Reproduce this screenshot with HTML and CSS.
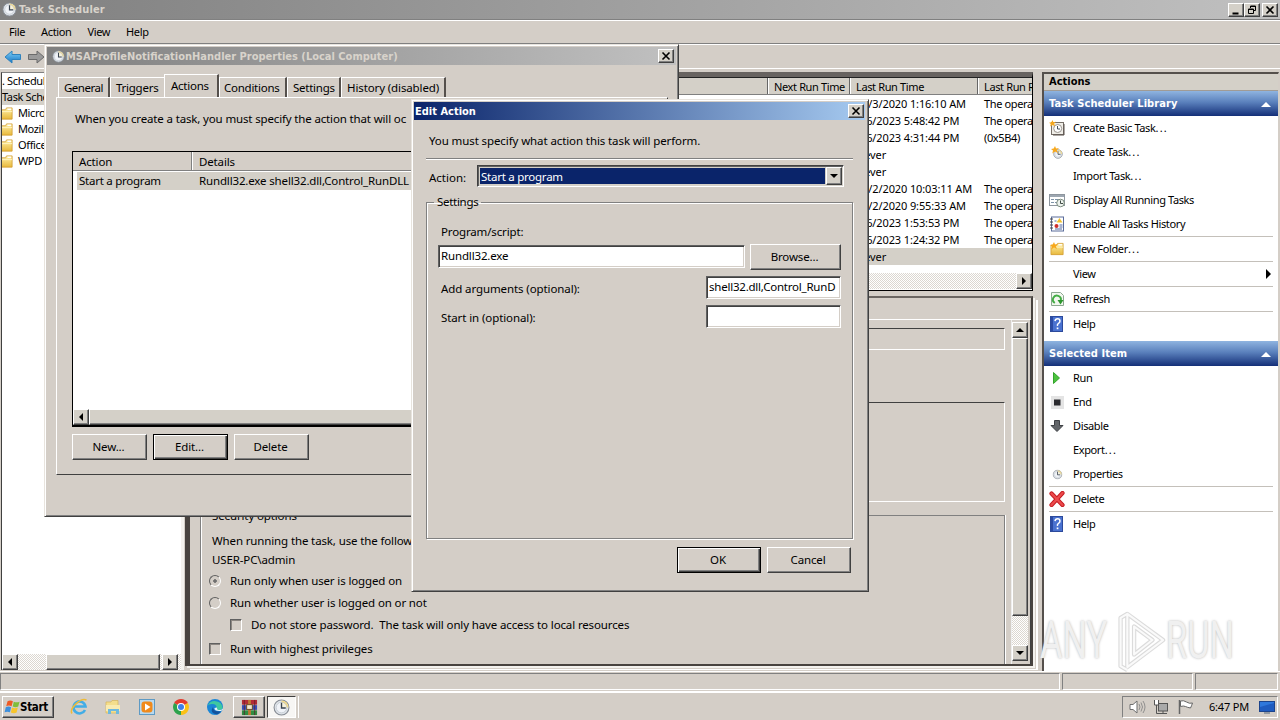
FILE: index.html
```html
<!DOCTYPE html>
<html lang="en">
<head>
  <meta charset="UTF-8">
  <title>Task Scheduler</title>
  <link rel="stylesheet" href="styles.css">
</head>
<body>
  <!-- Shared icons -->
  <svg class="defs" width="0" height="0">
    <defs>
      <linearGradient id="gold" x1="0" y1="0" x2="0" y2="1"><stop offset="0" stop-color="#fff0a8"/><stop offset="1" stop-color="#e8b93c"/></linearGradient>
      <linearGradient id="sky" x1="0" y1="0" x2="0" y2="1"><stop offset="0" stop-color="#7fd0f8"/><stop offset="1" stop-color="#1675c4"/></linearGradient>
      <symbol id="clock" viewBox="0 0 16 16">
        <circle cx="8" cy="8" r="7" fill="#dfe4ea" stroke="#858b93"/>
        <path d="M8 8V1.5A6.5 6.5 0 0 1 14.500 8z" fill="#f6dc86"/>
        <circle cx="8" cy="8" r="5" fill="#f7fafd" fill-opacity=".7" stroke="#b7bec6" stroke-width=".6"/>
        <path d="M8 3.500V8.500H12" fill="none" stroke="#39434f" stroke-width="1.300"/>
      </symbol>
      <symbol id="folder" viewBox="0 0 16 16">
        <path d="M1 14V4h6l1-2h6v12z" fill="url(#gold)" stroke="#d09a2c" stroke-width=".8"/>
        <path d="M9 3.500h4" stroke="#fff" stroke-width="1.500"/>
        <path d="M1.500 6h12.500" stroke="#fff5c4"/>
      </symbol>
      <symbol id="star" viewBox="0 0 8 8">
        <path d="M4 0l1 2.500L8 2 5.800 4.200 7 7 4 5.600 1.300 7.500 2 4.600 0 3l2.700-.5z" fill="#f7a81c"/>
      </symbol>
      <symbol id="help" viewBox="0 0 16 16">
        <rect x="1.500" y=".5" width="12" height="15" fill="#4a72d0" stroke="#2c4a9c"/>
        <rect x="2" y="1" width="2" height="14" fill="#2a4aa4"/>
        <path d="M6 5.200q.3-2.400 2.600-2.400T11 5q0 1.400-1.500 2.300T8.500 10" fill="none" stroke="#fff" stroke-width="1.500"/>
        <rect x="7.700" y="11.500" width="1.700" height="1.700" fill="#fff"/>
      </symbol>
      <symbol id="cross" viewBox="0 0 10 10"><path d="M1.500 1.500l7 7M8.500 1.500l-7 7" stroke="#000" stroke-width="1.600"/></symbol>
    </defs>
  </svg>

  <div class="desktop">
    <div class="titlebar inactive">
      <svg class="ic"><use href="#clock"/></svg>
      <span class="title">Task Scheduler</span>
      <div class="caps">
        <i class="cap"><svg viewBox="0 0 10 10"><path d="M1.500 8.500h6" stroke="#000" stroke-width="2"/></svg></i>
        <i class="cap"><svg viewBox="0 0 10 10"><path d="M3.500 3V1h5v4.500H7M1.500 4h5v4.500h-5zM3.500 1.500h5M1.500 4.500h5" fill="none" stroke="#000"/></svg></i>
        <i class="cap gap"><svg><use href="#cross"/></svg></i>
      </div>
    </div>
    <div class="menubar"><span>File</span><span>Action</span><span>View</span><span>Help</span></div>
    <div class="toolbar">
      <svg viewBox="0 0 18 16"><path d="M1 8l7-6v3.500h8.500v5H8V14z" fill="url(#sky)" stroke="#2f82bd"/></svg>
      <svg viewBox="0 0 18 16"><path d="M17 8l-7-6v3.500H1.500v5H10V14z" fill="#9a9a9a" stroke="#6b6b6b"/></svg>
    </div>

    <div class="workspace">
      <div class="tree">
        <div class="tree-list">
          <div class="node root">. Scheduler</div>
          <div class="node sel">Task Scheduler</div>
          <div class="node"><svg><use href="#folder"/></svg>Microsoft</div>
          <div class="node"><svg><use href="#folder"/></svg>Mozilla</div>
          <div class="node"><svg><use href="#folder"/></svg>Office</div>
          <div class="node"><svg><use href="#folder"/></svg>WPD</div>
        </div>
        <div class="hscroll">
          <i class="sb left"></i><i class="thumb"></i><i class="sb right"></i>
        </div>
      </div>

      <div class="center">
        <div class="tasks">
          <div class="row head"><span></span><span>Next Run Time</span><span>Last Run Time</span><span>Last Run R</span></div>
          <div class="row"><span>12/3/2020 1:16:10 AM</span><span>The opera</span></div>
          <div class="row"><span>6/6/2023 5:48:42 PM</span><span>The opera</span></div>
          <div class="row"><span>6/6/2023 4:31:44 PM</span><span>(0x5B4)</span></div>
          <div class="row"><span>Never</span></div>
          <div class="row"><span>Never</span></div>
          <div class="row"><span>12/2/2020 10:03:11 AM</span><span>The opera</span></div>
          <div class="row"><span>12/2/2020 9:55:33 AM</span><span>The opera</span></div>
          <div class="row"><span>6/6/2023 1:53:53 PM</span><span>The opera</span></div>
          <div class="row"><span>6/6/2023 1:24:32 PM</span><span>The opera</span></div>
          <div class="row sel"><span>Never</span></div>
          <div class="hscroll"><i class="sb right"></i></div>
        </div>
        <div class="details">
          <div class="details-tabs"></div>
          <div class="details-body">
            <div class="details-page">
              <div class="box name"></div>
              <div class="box desc"></div>
              <div class="security">
                <div class="legend">Security options</div>
                <p class="when">When running the task, use the following user account:</p>
                <p class="user">USER-PC\admin</p>
                <div class="opt"><i class="radio on"></i>Run only when user is logged on</div>
                <div class="opt second"><i class="radio"></i>Run whether user is logged on or not</div>
                <div class="opt sub"><i class="check"></i>Do not store password.&nbsp; The task will only have access to local resources</div>
                <div class="opt last"><i class="check"></i>Run with highest privileges</div>
              </div>
            </div>
            <div class="vscroll">
              <i class="sb up"></i><i class="thumb"></i><i class="track"></i><i class="sb down"></i>
            </div>
          </div>
        </div>
      </div>

      <div class="actions">
        <div class="actions-title">Actions</div>
        <div class="section">Task Scheduler Library<i></i></div>
        <div class="item"><svg viewBox="0 0 16 16"><rect x="2.500" y="2.500" width="12" height="12" fill="#f0eee8" stroke="#766f68"/><path d="M15 4v11H4" fill="none" stroke="#58514b"/><circle cx="8.700" cy="8.500" r="4" fill="#fff" stroke="#9a948e"/><path d="M8.500 6v3H11" fill="none" stroke="#44505c"/><use href="#star" x="0" y="0" width="7" height="7"/></svg><span>Create Basic Task<span class="dots">...</span></span></div>
        <div class="item"><svg viewBox="0 0 16 16"><use href="#clock" x="4" y="5" width="10" height="10"/><use href="#star" x="2" y="2" width="8" height="8"/></svg><span>Create Task<span class="dots">...</span></span></div>
        <div class="item"><svg></svg><span>Import Task<span class="dots">...</span></span></div>
        <div class="item"><svg viewBox="0 0 16 16"><rect x=".5" y="2.500" width="15" height="11" fill="#fff" stroke="#8e969e"/><path d="M1 4h14" stroke="#9da7b1" stroke-width="2"/><path d="M2 7.500h3M6 7.500h4M2 10.500h3M6 10.500h2" stroke="#7e93a8"/><circle cx="11.500" cy="11" r="3.800" fill="#eef3ee" stroke="#7b8b7e"/><path d="M11.500 8.500V11.500H14" fill="none" stroke="#3f4b46"/></svg>Display All Running Tasks</div>
        <div class="item"><svg viewBox="0 0 16 16"><rect x="2.500" y="1" width="12" height="14" fill="#fff" stroke="#5a6c9a"/><path d="M1 3h3M1 6h3M1 9h3M1 12h3" stroke="#444"/><path d="M7.500 6.500L10.500 2 13.500 6.500z" fill="#f2c22b"/><circle cx="7.500" cy="10" r="2" fill="#cf2f2b"/><path d="M5.500 5h2M10.500 9h3M10.500 11h3M6 13h7" stroke="#52689f"/></svg>Enable All Tasks History</div>
        <div class="rule"></div>
        <div class="item"><svg viewBox="0 0 16 16"><use href="#folder" x="1" y="0" width="15" height="16"/><use href="#star" x="1" y="1" width="8" height="8"/></svg><span>New Folder<span class="dots">...</span></span></div>
        <div class="rule"></div>
        <div class="item"><svg></svg>View<i class="sub-arrow"></i></div>
        <div class="rule"></div>
        <div class="item"><svg viewBox="0 0 16 16"><path d="M2.500 1.500h9l3 3v10h-12z" fill="#f2f7ef" stroke="#8da891"/><path d="M5.800 12A4 4 0 1 1 11.800 9.500" fill="none" stroke="#43ad45" stroke-width="2"/><path d="M8.500 9h6L11.500 13.500z" fill="#2b962d"/></svg>Refresh</div>
        <div class="rule"></div>
        <div class="item"><svg><use href="#help"/></svg>Help</div>
        <div class="section second">Selected Item<i></i></div>
        <div class="item"><svg viewBox="0 0 16 16"><path d="M4.500 2.500v11l6-5.500z" fill="#4cc23e" stroke="#33a52c"/></svg>Run</div>
        <div class="item"><svg viewBox="0 0 16 16"><rect x="2" y="2" width="13" height="13" fill="#e4e4e4"/><rect x="5" y="5.500" width="6.500" height="6" fill="#2b2b2f"/></svg>End</div>
        <div class="item"><svg viewBox="0 0 16 16"><path d="M5.500 2.500h5v5h3.500L8 13.500 2 7.500h3.500z" fill="#63666a" stroke="#3e4145"/></svg>Disable</div>
        <div class="item"><svg></svg><span>Export<span class="dots">...</span></span></div>
        <div class="item"><svg viewBox="0 0 16 16"><use href="#clock" x="3.500" y="3.500" width="10" height="10"/></svg>Properties</div>
        <div class="rule"></div>
        <div class="item"><svg viewBox="0 0 16 16"><path d="M2.500 2.500l11 11.500M13.500 2L2.500 14" stroke="#c41a20" stroke-width="4.200" stroke-linecap="round"/><path d="M2.500 2.500l11 11.500M13.500 2L2.500 14" stroke="#ec4a4c" stroke-width="2.400" stroke-linecap="round"/></svg>Delete</div>
        <div class="rule"></div>
        <div class="item"><svg><use href="#help"/></svg>Help</div>
      </div>
    </div>

    <div class="statusbar"><i></i><i></i><i></i></div>

    <div class="taskbar">
      <div class="start">
        <svg viewBox="0 0 18 16"><path d="M4 1.500q3-1.500 6 0L8.500 7.200q-3-1.500-6 0z" fill="#ee5a24"/><path d="M11 2q3 1.500 6.500 0L16 7.500q-3 1.500-6.200 0z" fill="#7fbe3a"/><path d="M2 8.300q3-1.500 6 0L6.700 14q-3-1.500-6 0z" fill="#3d8fdc"/><path d="M9 8.600q3 1.500 6.500 0l-1.300 5.700q-3 1.500-6.500 0z" fill="#f7c52c"/></svg>Start
      </div>
      <div class="quick">
        <svg viewBox="0 0 18 18"><path d="M15 12a6 6 0 1 1 .5-3.500H5" fill="none" stroke="#42ade6" stroke-width="2.600"/><path d="M2 15.500C-1 11 10-.5 16.500 2" fill="none" stroke="#eebb38" stroke-width="1.500"/></svg>
        <svg viewBox="0 0 18 18"><path d="M2 15V4h5l1-1.500h6V15z" fill="#f4de8c" stroke="#d6b55a" stroke-width=".7"/><path d="M2 7h14v6H2z" fill="#f9ebb0"/><path d="M4 16v-5h11v5h-3v-3H7v3z" fill="#6fb9de"/></svg>
        <svg viewBox="0 0 18 18"><rect x="1.500" y="1.500" width="15" height="15" fill="#b9d9ef" stroke="#5e9ac4"/><rect x="3.500" y="3.500" width="11" height="11" rx="3" fill="#f08a1c"/><path d="M7 5.500v7l5.500-3.500z" fill="#fff"/></svg>
        <svg viewBox="0 0 18 18"><path d="M9 9L2.100 5A8 8 0 0 1 15.900 5z" fill="#e33b2e"/><path d="M9 9L15.900 5A8 8 0 0 1 9 17z" fill="#fbc116"/><path d="M9 9v8A8 8 0 0 1 2.100 5z" fill="#2da24c"/><circle cx="9" cy="9" r="4" fill="#fff"/><circle cx="9" cy="9" r="3" fill="#3f7fe8"/></svg>
        <svg viewBox="0 0 18 18"><circle cx="9" cy="9" r="8" fill="#1a86d6"/><path d="M1.500 8A8 8 0 0 1 16.800 10q-.8 2.500-4.500 2-2.500-.5-1.500-2.500Q10 5.500 6 6T1.500 8z" fill="#3fc8a0"/><path d="M7 9q0 5 8 4.500A8 8 0 0 1 11 16.500Q3 15 7 9z" fill="#14529c"/><path d="M8.500 10q-.5 3.500 6.500 3l2-1.500v-1q-1.500 1.800-4.500 1.500-2-.5-1.500-2.500z" fill="#e8f4fa"/></svg>
      </div>
      <div class="task-btn">
        <svg viewBox="0 0 18 18"><rect x="1" y="1" width="16" height="5" fill="#b22c38"/><rect x="1" y="6.500" width="16" height="5" fill="#3650b8"/><rect x="1" y="12" width="16" height="5" fill="#2f8d43"/><rect x="7.500" y="1" width="3" height="16" fill="#bc7a35"/><rect x="6" y="6" width="6" height="5" fill="#efe7d0" stroke="#6b4a20"/><path d="M3.500 1v16M14.500 1v16" stroke="#5c1c2c" stroke-width=".8"/></svg>
      </div>
      <div class="task-btn pressed"><svg><use href="#clock"/></svg></div>
      <div class="tray">
        <svg viewBox="0 0 18 16"><path d="M2 5.500h3l4-3.500v12l-4-3.500H2z" fill="#fff" stroke="#6f6f6f"/><path d="M11 5q2 3 0 6M13 3.500q3 4.500 0 9M15 2q4 6 0 12" fill="none" stroke="#888" stroke-width=".9"/></svg>
        <svg viewBox="0 0 18 16"><rect x="6.500" y="4.500" width="9" height="7.500" fill="#a9a9a9" stroke="#555"/><path d="M8 14.500h7M11 12v2.500" stroke="#555"/><path d="M4.500 6v8.500H8" fill="none" stroke="#555"/><path d="M2.500 1v5h4V1" fill="#fff" stroke="#555"/></svg>
        <svg viewBox="0 0 18 16"><path d="M3.500 1v14" stroke="#666" stroke-width="1.500"/><path d="M4.500 2q3-1 6 1t6 1q-1 3-2 5-3-.5-5-1.500t-5 0z" fill="#fff" stroke="#666"/></svg>
        <span>6:47 PM</span>
        <svg class="screen" viewBox="0 0 16 14"><rect x=".5" y="1.500" width="15" height="10" fill="#2f78dc" stroke="#1c448c"/><path d="M1 7l14-4v8H1z" fill="#1f5cc0"/><path d="M5 13h6" stroke="#7c8794" stroke-width="1.500"/></svg>
      </div>
    </div>

    <!-- Watermark -->
    <div class="watermark">
      <span class="any">ANY</span>
      <svg viewBox="0 0 60 64"><g fill="none" stroke-linejoin="round"><path d="M20 4v55L57 31z M20 4L13 8v50l7 4 M27 17v29L46 31z" stroke="#bdbdbd" stroke-width="4.500" stroke-opacity=".55"/><path d="M20 4v55L57 31z M20 4L13 8v50l7 4 M27 17v29L46 31z" stroke="#fafafa" stroke-width="2.200"/></g></svg>
      <span class="run">RUN</span>
    </div>

    <!-- Properties window -->
    <div class="window props">
      <div class="titlebar inactive">
        <svg class="ic"><use href="#clock"/></svg>
        <span class="title">MSAProfileNotificationHandler Properties (Local Computer)</span>
        <div class="caps"><i class="cap"><svg><use href="#cross"/></svg></i></div>
      </div>
      <div class="tabs">
        <span class="t1">General</span><span class="t2">Triggers</span><span class="t3 active">Actions</span><span class="t4">Conditions</span><span class="t5">Settings</span><span class="t6">History (disabled)</span>
      </div>
      <div class="page">
        <p>When you create a task, you must specify the action that will oc</p>
        <div class="list">
          <div class="list-head"><span>Action</span><span>Details</span></div>
          <div class="list-row"><span>Start a program</span><span>Rundll32.exe shell32.dll,Control_RunDLL</span></div>
          <div class="hscroll"><i class="sb left"></i><i class="thumb"></i></div>
        </div>
        <div class="buttons"><button>New...</button><button class="default">Edit...</button><button>Delete</button></div>
      </div>
    </div>

    <!-- Edit Action dialog -->
    <div class="window edit">
      <div class="titlebar">
        <span class="title">Edit Action</span>
        <div class="caps"><i class="cap"><svg><use href="#cross"/></svg></i></div>
      </div>
      <p class="intro">You must specify what action this task will perform.</p>
      <div class="etched"></div>
      <div class="action-row">
        <label>Action:</label>
        <div class="combo"><span>Start a program</span><i class="sb down"></i></div>
      </div>
      <fieldset>
        <legend>Settings</legend>
        <label class="prog">Program/script:</label>
        <div class="field-row first"><div class="input wide">Rundll32.exe</div><button>Browse...</button></div>
        <div class="field-row"><label>Add arguments (optional):</label><div class="input args">shell32.dll,Control_RunD</div></div>
        <div class="field-row"><label>Start in (optional):</label><div class="input"></div></div>
      </fieldset>
      <div class="buttons"><button class="default">OK</button><button>Cancel</button></div>
    </div>
  </div>
</body>
</html>
```
FILE: styles.css
```css
* {
  margin: 0;
  padding: 0;
  box-sizing: border-box;
}

body {
  width: 1280px;
  height: 720px;
  overflow: hidden;
  font: 11px/16px "Noto Sans", "Open Sans", sans-serif;
  letter-spacing: -0.37px;
  color: #000;
}

i { font-style: normal; display: block; flex: none; }
svg { display: block; flex: none; }
.defs { position: absolute; }

.desktop {
  position: relative;
  display: flex;
  flex-direction: column;
  width: 1280px;
  height: 720px;
  overflow: hidden;
  background: #d4cec7;
}

/* Title bars */
.titlebar {
  display: flex;
  align-items: center;
  flex: none;
  height: 19px;
  padding: 0 2px 0 2px;
  color: #fff;
  background: linear-gradient(90deg, #0a246a, #a6caf0);
}

.titlebar.inactive {
  background: linear-gradient(90deg, #808080, #c0c0c0);
  color: #d8d3cb;
}

.titlebar .ic { width: 15px; height: 15px; margin-right: 2px; }

.title {
  flex: 1;
  font: bold 11px/17px "DejaVu Sans Condensed", sans-serif;
  letter-spacing: 0;
  white-space: nowrap;
}

.desktop > .titlebar .title { letter-spacing: 0.15px; line-height: 16px; }

.caps { display: flex; }

.cap {
  width: 16px;
  height: 14px;
  padding: 1px 2px;
  background: #d4d0c8;
  border: 1px solid;
  border-color: #fff #404040 #404040 #fff;
  box-shadow: inset -1px -1px #808080;
}

.cap.gap { margin-left: 2px; }
.cap svg { width: 10px; height: 10px; }

.menubar {
  display: flex;
  align-items: center;
  gap: 16px;
  height: 25px;
  padding: 1px 0 0 9px;
  border-top: 1px solid #808080;
  border-bottom: 1px solid #808080;
  box-shadow: inset 0 1px #fff;
}

.toolbar {
  display: flex;
  align-items: center;
  gap: 5px;
  height: 24px;
  padding-left: 4px;
  border-top: 1px solid #fff;
}

.toolbar svg { width: 18px; height: 16px; }

/* Scrollbar parts */
.sb {
  display: flex;
  align-items: center;
  justify-content: center;
  width: 16px;
  height: 16px;
  background: #d4d0c8;
  border: 1px solid;
  border-color: #fff #404040 #404040 #fff;
  box-shadow: inset -1px -1px #808080;
}

.sb::after { content: ""; border: 4px solid transparent; }
.sb.left::after { border-right-color: #000; border-left-width: 0; }
.sb.right::after { border-left-color: #000; border-right-width: 0; }
.sb.up::after { border-bottom-color: #000; border-top-width: 0; }
.sb.down::after { border-top-color: #000; border-bottom-width: 0; }

.hscroll {
  display: flex;
  flex: none;
  height: 16px;
  background: repeating-conic-gradient(#fff 0 25%, #dcd7d0 0 50%) 0 0 / 2px 2px;
}

.thumb {
  background: #d4d0c8;
  border: 1px solid;
  border-color: #fff #404040 #404040 #fff;
  box-shadow: inset -1px -1px #808080;
}

/* Workspace */
.workspace {
  display: flex;
  height: 604px;
  border-top: 1px solid #fff;
  border-bottom: 1px solid #fff;
}

.tree {
  display: flex;
  flex-direction: column;
  width: 183px;
  margin: 3px 0 1px 1px;
  border-top: 1px solid #808080;
  border-left: 1px solid #404040;
  border-right: 3px solid #f4f2ee;
  background: #fff;
}

.tree-list { flex: 1; overflow: hidden; }

.node {
  display: flex;
  align-items: center;
  height: 16px;
  gap: 4px;
  white-space: nowrap;
}

.node.sel { background: #d4d0c8; }
.node svg { width: 15px; height: 15px; margin-left: -3px; }

.tree .thumb { width: 114px; margin: 0 2px 0 28px; }

.center {
  display: flex;
  flex-direction: column;
  width: 853px;
  margin: 3px 0 2px 1px;
}

.tasks {
  display: flex;
  flex-direction: column;
  width: 848px;
  height: 219px;
  border: solid #000;
  border-width: 5px 1px 1px 4px;
  border-top-color: #686360;
  border-left-color: #686360;
  background: #fff;
}

.row {
  display: flex;
  height: 17px;
  line-height: 17px;
  padding-left: 667px;
  overflow: hidden;
  white-space: nowrap;
}

.row span { flex: none; }
.row span:first-child { width: 128px; letter-spacing: -0.12px; }
.row.sel { background: #d4d0c8; }

.row.head {
  height: 18px;
  padding: 0;
  border-top: 1px solid #222;
  background: #d4d0c8;
  border-bottom: 1px solid #808080;
}

.row.head span {
  padding-left: 5px;
  border-left: 1px solid #fff;
  border-right: 1px solid #666;
  width: 82px;
  line-height: 17px;
}

.row.head span:first-child { width: 579px; }
.row.head span:nth-child(3) { width: 128px; }
.row.head span:last-child { width: 60px; border-right: 0; }

.tasks .hscroll { justify-content: flex-end; }
.tasks .row.sel + .hscroll { margin-top: 8px; }

.details {
  display: flex;
  flex-direction: column;
  height: 370px;
  width: 848px;
  margin-top: 5px;
  border: solid #48433f;
  border-width: 2px 2px 2px 5px;
  border-top-color: #6b6662;
  box-shadow: 2px 2px #f4f2ee, 3px 3px #d4cec7, 5px 4px #fff;
}

.details-tabs { height: 22px; border-bottom: 1px solid #fff; }

.details-body { display: flex; flex: 1; overflow: hidden; }

.details-page { flex: 1; padding: 8px 6px 0 10px; border-right: 1px solid #eee; }

.box { border: 1px solid #fff; border-top: 1px solid #404040; }
.box.name { height: 22px; }
.box.desc { height: 100px; margin-top: 52px; }

.security {
  height: 160px;
  margin-top: 13px;
  padding-left: 11px;
  border: 1px solid #808080;
  border-bottom: 0;
  box-shadow: inset 1px 0 #fff, 1px 0 #fff;
  letter-spacing: -0.13px;
  font-size: 11.5px;
}

.legend { height: 16px; margin-top: -8px; }
.when { margin-top: 9px; height: 16px; }
.user { margin-top: 3px; height: 16px; }

.opt { display: flex; align-items: center; height: 16px; gap: 9px; margin: 5px 0 0 -3px; }
.opt.second { margin-top: 6px; }
.opt.sub { margin: 6px 0 0 18px; }
.opt.last { margin-top: 8px; }

.radio {
  width: 12px;
  height: 12px;
  border: 1px solid;
  border-color: #606060 #fff #fff #606060;
  border-radius: 50%;
}

.radio.on { background: radial-gradient(circle, #707070 1.500px, transparent 2px); }

.check {
  width: 12px;
  height: 12px;
  border: 1px solid;
  border-color: #606060 #fff #fff #606060;
  box-shadow: inset 1px 1px #8c8782;
}

.vscroll { display: flex; flex-direction: column; width: 19px; padding: 2px 2px 3px 0; border-right: 1px solid #404040; }
.vscroll .thumb { height: 278px; width: 16px; }
.vscroll .track { flex: 1; background: repeating-conic-gradient(#fff 0 25%, #dcd7d0 0 50%) 0 0 / 2px 2px; }

/* Actions pane */
.actions {
  width: 237px;
  margin: 3px 0 0 4px;
  border-left: 2px solid #55504c;
  border-top: 2px solid #55504c;
  border-right: 1px solid #d4cec7;
  background: #fff;
}

.actions-title {
  height: 17px;
  padding-left: 5px;
  background: #d4d0c8;
  border-bottom: 1px solid #a09b95;
  font: bold 11px/16px "DejaVu Sans Condensed", sans-serif;
  letter-spacing: 0;
}

.section {
  display: flex;
  align-items: center;
  justify-content: space-between;
  height: 25px;
  padding: 1px 7px 0 5px;
  color: #fff;
  background: linear-gradient(#8fb4e0, #5a80bc 45%, #142f78);
  font: bold 11px/16px "DejaVu Sans Condensed", sans-serif;
  letter-spacing: 0.07px;
}

.section i { border: 5px solid transparent; border-top: 0; border-bottom-color: #fff; }
.section.second { margin-top: 5px; }

.item {
  display: flex;
  align-items: center;
  height: 24px;
  padding-left: 5px;
  gap: 8px;
}

.item svg { width: 16px; height: 16px; }
.dots { letter-spacing: 1.200px; }
.sub-arrow { margin-left: auto; margin-right: 7px; border: 5px solid transparent; border-left-color: #000; border-right: 0; }
.rule { height: 1px; margin: 0 5px; background: #c4c0ba; }

/* Status bar */
.statusbar {
  display: flex;
  gap: 2px;
  height: 20px;
  padding: 1px 2px 1px 0;
  border-bottom: 1px solid #fff;
}

.statusbar i { flex: 1; border: 1px solid; border-color: #808080 #fff #fff #808080; }
.statusbar i:nth-child(2) { flex: 0 0 131px; }
.statusbar i:nth-child(3) { flex: 0 0 83px; }

/* Taskbar */
.taskbar {
  display: flex;
  align-items: center;
  height: 28px;
  padding: 1px 2px 0;
  border-top: 1px solid #fff;
}

.start {
  display: flex;
  align-items: center;
  width: 52px;
  height: 22px;
  padding-left: 1px;
  border: 1px solid;
  border-color: #fff #404040 #404040 #fff;
  box-shadow: inset -1px -1px #808080;
  font: bold 11.5px/16px "DejaVu Sans Condensed", sans-serif;
  letter-spacing: -0.3px;
}

.start svg { width: 16px; height: 16px; }
.quick { display: flex; gap: 16px; margin-left: 16px; width: 163px; }
.quick svg { width: 18px; height: 18px; }

.task-btn {
  display: flex;
  align-items: center;
  justify-content: center;
  width: 32px;
  height: 22px;
  border: 1px solid;
  border-color: #fff #404040 #404040 #fff;
  box-shadow: inset -1px -1px #808080;
}

.task-btn svg { width: 17px; height: 17px; }

.task-btn.pressed {
  width: 29px;
  margin-left: 2px;
  background: #f7f6f4;
  border-color: #404040 #fff #fff #404040;
  box-shadow: 2px 0 #d4cec7, 3px 0 #fff;
}

.tray {
  display: flex;
  align-items: center;
  gap: 6px;
  width: 156px;
  height: 22px;
  margin-left: auto;
  padding-left: 5px;
  border: 1px solid;
  border-color: #808080 #fff #fff #808080;
}

.tray svg { width: 18px; height: 16px; }
.tray span { width: 42px; margin: 0 2px 0 9px; white-space: nowrap; letter-spacing: -0.2px; }
.tray .screen { width: 16px; height: 14px; }

.watermark {
  position: absolute;
  left: 1040px;
  top: 609px;
  width: 194px;
  height: 64px;
  display: flex;
  align-items: center;
}

.watermark span {
  display: block;
  width: 68px;
  font: 52px/64px "Roboto", sans-serif;
  letter-spacing: 0;
  color: #f0f0f0;
  text-shadow: 0 0 3px #b4b4b4;
  transform: scaleX(.66);
  transform-origin: 0 50%;
}

.watermark svg { width: 58px; height: 64px; }

/* Windows */
.window {
  position: absolute;
  display: flex;
  flex-direction: column;
  background: #d4cec7;
  border: 1px solid;
  border-color: #e8e4de #404040 #404040 #e8e4de;
  box-shadow: inset 1px 1px #fff, inset -1px -1px #808080;
  font-size: 11.5px;
  letter-spacing: -0.15px;
}

.window .titlebar { height: 18px; }

.props {
  left: 44px;
  top: 44px;
  width: 635px;
  height: 473px;
  padding: 2px;
}

.props .titlebar .ic { width: 13px; height: 13px; margin: 0 1px 0 3px; }

.tabs {
  display: flex;
  align-items: flex-end;
  height: 32px;
  padding-left: 11px;
  letter-spacing: -0.25px;
}

.tabs span {
  height: 20px;
  line-height: 19px;
  padding-left: 5px;
  border-top: 1px solid #fff;
  border-left: 1px solid #fff;
  border-right: 2px solid #55504c;
  white-space: nowrap;
}

.tabs .t1 { width: 52px; letter-spacing: -0.5px; }
.tabs .t2 { width: 54px; border-right: 0; }
.tabs .t3 { width: 55px; height: 23px; line-height: 21px; padding-left: 6px; }
.tabs .t4 { width: 68px; padding-left: 4px; }
.tabs .t5 { width: 54px; }
.tabs .t6 { width: 105px; letter-spacing: -0.12px; }

.page {
  margin: 0 9px;
  width: 612px;
  height: 378px;
  padding: 13px 15px 0;
  border: 1px solid;
  border-color: #fff #404040 #404040 #fff;
}

.page p { height: 16px; white-space: nowrap; padding-left: 3px; }

.list {
  display: flex;
  flex-direction: column;
  width: 580px;
  height: 276px;
  margin-top: 24px;
  border: 1px solid #000;
  border-bottom-width: 2px;
  background: #fff;
}

.list-head { display: flex; height: 19px; line-height: 19px; background: #d4cec7; border-bottom: 1px solid #808080; }
.list-head span { padding-left: 7px; }
.list-head span:first-child { width: 119px; padding-left: 6px; border-right: 1px solid #808080; box-shadow: 1px 0 #fff; }
.list-row { display: flex; height: 18px; line-height: 18px; margin: 1px 0 0 4px; background: #d4d0c8; }
.list-row span { padding-left: 2px; }
.list-row span:first-child { width: 120px; letter-spacing: -0.25px; }
.list .hscroll { margin-top: auto; }
.list .thumb { flex: 1; }

button {
  width: 75px;
  height: 26px;
  font: inherit;
  letter-spacing: inherit;
  color: #000;
  background: #d4cec7;
  border: 1px solid;
  border-color: #fff #404040 #404040 #fff;
  box-shadow: inset -1px -1px #808080;
}

button.default {
  border-color: #000;
  box-shadow: inset 1px 1px #fff, inset -1px -1px #404040, inset -2px -2px #808080;
}

.buttons { display: flex; gap: 6px; margin-top: 7px; }
.props button { padding-right: 2px; }

.edit {
  left: 411px;
  top: 99px;
  width: 458px;
  height: 493px;
  padding: 2px 3px;
}

.edit .titlebar { padding: 0; margin-left: -1px; }
.edit .titlebar .title { padding-left: 1px; }
.edit .titlebar .caps { margin-right: 1px; }

.intro { height: 16px; margin: 13px 0 9px 14px; letter-spacing: -0.1px; }
.etched { height: 2px; margin: 0 12px 0 11px; border-top: 1px solid #808080; border-bottom: 1px solid #fff; }

.action-row { display: flex; margin: 5px 0 0 14px; height: 22px; }
.action-row label { width: 48px; line-height: 25px; letter-spacing: 0; }

.combo {
  display: flex;
  width: 367px;
  padding: 1px;
  border: 1px solid;
  border-color: #404040 #fff #fff #404040;
  background: #d4d0c8;
  box-shadow: inset 1px 1px #606060;
}

.combo span { flex: 1; margin: 1px; padding-left: 1px; background: #0a246a; color: #fff; line-height: 18px; letter-spacing: -0.25px; }
.combo .sb { height: 18px; }

fieldset {
  height: 345px;
  margin: 7px 12px 0 11px;
  border: 1px solid #808080;
  box-shadow: 1px 1px #fff, inset 1px 1px #fff;
  padding: 0 11px;
}

fieldset legend { padding: 0 3px; margin-left: -4px; line-height: 16px; letter-spacing: -0.3px; }
fieldset label { display: block; padding-left: 3px; }
.prog { margin-top: 14px; }

.field-row { display: flex; justify-content: space-between; align-items: center; height: 29px; line-height: 18px; }
.field-row.first { margin: 2px 0; }
.field-row label { padding-top: 2px; letter-spacing: -0.1px; }

.input {
  width: 135px;
  height: 23px;
  padding-left: 2px;
  line-height: 19px;
  white-space: nowrap;
  background: #fff;
  border: 1px solid;
  border-color: #606060 #fff #fff #606060;
  box-shadow: inset 1px 1px #404040, inset -1px -1px #d4cec7;
}

.input.wide { width: 307px; }
.input.args { letter-spacing: -0.22px; }
.field-row button { width: 91px; padding-right: 2px; }

.edit .buttons { justify-content: flex-end; margin: 8px 14px 0 0; }
.edit .buttons button { width: 84px; padding-right: 2px; }
```
